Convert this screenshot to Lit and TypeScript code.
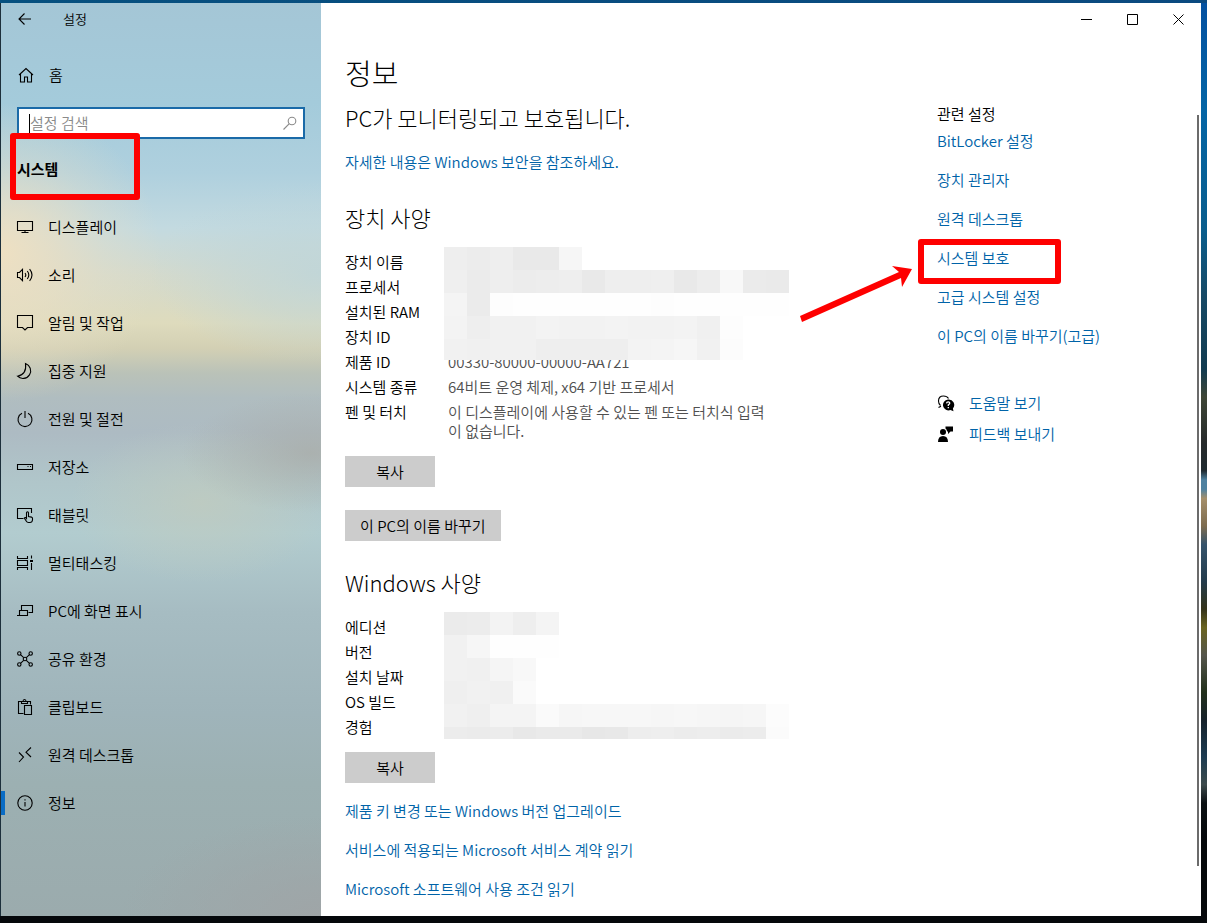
import { LitElement, html, css, svg } from "lit";
import { customElement, property } from "lit/decorators.js";

type Row = { label: string; value: string };

/** Shades of the pixelated cells that cover private values, row by row. */
const DEVICE_MOSAIC = [
  ["eeeeee", "ececec", "eeeeee", "e9e9e9", "e9e9e9", "f6f6f6"],
  ["efefef", "ebebeb", "eeeeee", "ececec", "ededed", "eeeeee", "e9e9e9", "eeeeee", "eeeeee", "efefef", "e9e9e9", "ededed", "f8f8f8", "ebebeb", "eaeaea"],
  ["f4f4f4", "ebebeb", "fdfdfd", "fefefe", "fefefe", "fefefe", "fefefe", "fefefe", "fefefe", "fdfdfd", "fefefe", "fefefe", "fefefe", "fefefe", "fefefe"],
  ["f3f3f3", "eeeeee", "f1f1f1", "f1f1f1", "f3f3f3", "f2f2f2", "f2f2f2", "f3f3f3", "f2f2f2", "f2f2f2", "f3f3f3", "f0f0f0", "fdfdfd"],
  ["f1f1f1", "f0f0f0", "f1f1f1", "f1f1f1", "eeeeee", "eeeeee", "eeeeee", "eeeeee", "f3f3f3", "f4f4f4", "f6f6f6", "f1f1f1", "fcfcfc"],
];
const WINDOWS_MOSAIC = [
  ["ebebeb", "ececec", "f3f3f3", "eeeeee", "f4f4f4"],
  ["f1f1f1", "f6f6f6", "fefefe", "fefefe", "fefefe"],
  ["f1f1f1", "f0f0f0", "f5f5f5", "f8f8f8"],
  ["efefef", "f1f1f1", "f0f0f0", "fafafa"],
  ["f1f1f1", "efefef", "f4f4f4", "f4f4f4", "fafafa", "f6f6f6", "f7f7f7", "f7f7f7", "f7f7f7", "f6f6f6", "f7f7f7", "f6f6f6", "f5f5f5", "f6f6f6", "fcfcfc"],
  ["ececec", "ebebeb", "ececec", "e8e8e8", "eaeaea", "eaeaea", "e7e7e7", "e8e8e8", "ededed", "eeeeee", "ececec", "ededed", "ebebeb", "ececec", "fbfbfb"],
];

const ICONS: Record<string, unknown> = {
  display: svg`<path d="M1.5 3.5h15v9h-15zM9 12.5v2M5.5 14.5h7"/>`,
  sound: svg`<path d="M1.5 6.5h2l3-3.2v11.4l-3-3.2h-2zM9 7q1.6 2 0 4M11.3 5q3 4 0 8M13.6 3.200q4.800 5.800 0 11.600"/>`,
  notify: svg`<path d="M1.500 1.500h15v12h-5l-2.500 2.500-2.500-2.500h-5z"/>`,
  moon: svg`<path d="M9.500 1.500a7.700 7.700 0 1 1-8 12.700q9.500-2 8-12.700z"/>`,
  power: svg`<path d="M6 3.300a7 7 0 1 0 6 0M9 1v7"/>`,
  storage: svg`<path d="M1.500 6.500h15v5h-15z"/><path d="M11.500 8.500h1M14 8.500h1"/>`,
  tablet: svg`<path d="M7.500 12.500h-6v-10h14v4.500"/><path d="M10.500 12.500V6.800q0-1 1-1t1 1v3.700l3 .6q1 .3 1 1.300v1.600q-.3 2.500-2.500 2.500h-1.500q-1.500 0-2.300-1.500l-1.900-3q.9-1.100 2.200.5z"/>`,
  multitask: svg`<path d="M1.500 2v2.500h10V2M1.500 6.500h10v5h-10zM1.500 16v-2.500h10V16M15.500 1.500v3M15.500 9v7"/><path d="M14 7h3" stroke-width="2"/>`,
  project: svg`<path d="M5.500 8V3.500h11v7h-4M3.500 8.500h8v5h-8zM1 13.500h11"/>`,
  share: svg`<circle cx="3.300" cy="3.500" r="1.700"/><circle cx="14.700" cy="3.500" r="1.700"/><circle cx="3.300" cy="14.500" r="1.700"/><circle cx="14.700" cy="14.500" r="1.700"/><circle cx="9" cy="9" r="1.800"/><path d="M4.500 4.700l3.200 3M13.500 4.700l-3.200 3M4.500 13.300l3.200-3M13.500 13.300l-3.200-3"/>`,
  clipboard: svg`<path d="M7.500 15.500h-5v-12h12v3M5.500 5.500v-2h1.500q0-2 1.500-2t1.500 2h1.500v2zM8.500 7.500h7v9h-7z"/>`,
  remote: svg`<path d="M3 6.500l4.500 4.500-4.500 5M15 1.500l-5 4.700 5 4.800"/>`,
  info: svg`<circle cx="9" cy="9" r="7.200"/><path d="M9 8v4.500M9 5.300v1.200"/>`,
  home: svg`<path d="M2 9l7-6.500L16 9M3.500 8v8h4v-5h3v5h4V8"/>`,
  back: svg`<path d="M15 9H3.500M8.500 3.500L3 9l5.500 5.500"/>`,
  search: svg`<circle cx="11" cy="7" r="3.800"/><path d="M8.300 9.700L2.500 15.500"/>`,
  help: svg`<path d="M3.500 11.500q-2-1.500-2-4.500 0-5 5-5 3.500 0 5 2.500M1.500 13.500l2.500-1.300"/><path class="solid" d="M11 5.500a5.500 5.500 0 1 0 2.500 10.600l3 1.200-.6-2.800A5.500 5.500 0 0 0 11 5.500z"/><path class="knock" d="M9.500 9.300q.2-1.500 1.700-1.500t1.600 1.300q0 1-1.500 1.700v1.200M11.300 13v1.200"/>`,
  feedback: svg`<g class="solid"><circle cx="6" cy="7" r="3"/><path d="M1 17q0-6 5-6t5 6zM8.500 1.500h7.500v5h-2.500L11 9V6.500H10q0-2-1.500-3z"/></g>`,
};

@customElement("ui-icon")
class UiIcon extends LitElement {
  @property() name = "";
  static styles = css`
    :host { display: inline-flex; flex: none; }
    svg { width: 18px; height: 18px; fill: none; stroke: currentColor; stroke-width: 1.1; }
    .solid { fill: currentColor; stroke: none; }
    .knock { stroke: #fff; stroke-width: 1.3; }
  `;
  render() {
    return html`<svg viewBox="0 0 18 18" aria-hidden="true">${ICONS[this.name]}</svg>`;
  }
}

@customElement("app-root")
class AppRoot extends LitElement {
  static styles = css`
    *, *::after { box-sizing: border-box; }
    :host {
      display: block;
      font: 350 15px/20px "Noto Sans CJK KR", sans-serif;
      color: #000;
    }
    h1, h2, h3, p, ul { margin: 0; padding: 0; font-weight: inherit; }
    h3 { font-size: 15px; }
    ul { list-style: none; }
    a { color: #0063a8; text-decoration: none; }
    button { font: inherit; color: inherit; border: 0; }

    .desktop {
      min-height: 100vh;
      display: flex;
      padding: 3px 6px 7px 1px;
      background:
        linear-gradient(#05080b, #05080b) bottom / 100% 7px no-repeat,
        linear-gradient(90deg, #06507f, #0b4a80) top / 100% 3px no-repeat,
        linear-gradient(#0450a0 0, #0465a5 12%, #0a5d8c 25%, #174a66 32%, #123b50 40%, #3e4636 43%, #262a2b 48%, #1f2a30 51%, #4e81a0 52%, #4e81a0 53%, #a58f6a 54%, #7d6c50 57%, #35536b 59%, #243c4c 63%, #34331a 66%, #6a6420 68%, #55564c 71%, #22301c 75%, #16222a 78%, #1d3c52 82%, #3d4b4c 85%, #0b1013 87%, #05080b 91%) right / 6px 100% no-repeat,
        #1c2f3b;
    }
    .window { position: relative; flex: 1; display: grid; grid-template-columns: 320px 1fr; background: #fff; }

    .side {
      background:
        radial-gradient(ellipse 160px 150px at 0 250px, #eee0c2 0, #ecdfc2bb 30%, #e8dfc655 65%, #e8dfc600 100%),
        radial-gradient(ellipse 170px 90px at 320px 270px, #bdd5dacc 0, #bdd5da77 50%, #bdd5da00 100%),
        radial-gradient(ellipse 130px 60px at 310px 450px, #a9aaa4aa 0, #a9aaa455 50%, #a9aaa400 100%),
        radial-gradient(ellipse 130px 80px at 200px 500px, #c0cbbfcc 0, #c0cbbf66 50%, #c0cbbf00 100%),
        radial-gradient(ellipse 200px 100px at 320px 913px, #9fa5a7 0, #9fa5a700 100%),
        linear-gradient(#a4c6d6 0, #a4cbdb 100px, #afd0de 170px, #c3dae0 225px, #d4dacd 270px, #deDbbd 320px, #d3d0b4 345px, #bac2b8 370px, #b0bdc0 395px, #adbbc3 430px, #b0c6ca 480px, #b2cccf 530px, #a6bcc2 610px, #9fb4ba 710px, #9cb0b2 780px, #9babad 100%);
    }
    .side-title { display: flex; align-items: center; gap: 29px; height: 32px; padding-left: 15px; font-size: 13px; }
    .icon-button { display: flex; background: none; padding: 0; }
    .home { display: flex; align-items: center; gap: 14px; height: 48px; margin-top: 16px; padding-left: 16px; color: inherit; }
    .search { display: flex; align-items: center; margin: 8px 16px 0; height: 32px; padding: 0 4px 0 10px; border: 2px solid #1a6aa8; background: #fff; }
    .search input { flex: 1; min-width: 0; border: 0; padding: 0; outline: 0; font: inherit; background: none; }
    .search input::placeholder { color: #8a8a8a; opacity: 1; }
    .caret { width: 1px; height: 19px; background: #000; }
    .search ui-icon { color: #8a8a8a; }
    .section { position: relative; height: 64px; padding: 20px 16px; font-weight: 700; }
    .section::after { content: ""; position: absolute; left: 9px; top: -6px; width: 130px; height: 67px; }
    .mark::after { border: 6px solid #fe0000; border-radius: 3px; }
    .nav a { display: flex; align-items: center; gap: 14px; height: 48px; padding-left: 15px; color: inherit; }
    .nav a.current { background: linear-gradient(#0a6cc4, #0a6cc4) left / 4px 24px no-repeat; }

    .controls { display: flex; justify-content: flex-end; height: 32px; }
    .controls button { width: 46px; display: grid; place-items: center; background: none; padding: 0; }
    .controls svg { width: 11px; height: 11px; fill: none; stroke: #000; }
    .content { display: grid; grid-template-columns: minmax(0, 1fr) 240px; padding: 17px 24px 16px; }
    h1 { font-size: 29px; line-height: 40px; font-weight: 300; }
    h2 { font-size: 22px; line-height: 30px; font-weight: 300; }
    .status { margin: 10px 0 20px; }
    .specs { margin-top: 30px; }
    .specs.second { margin-top: 26px; }
    .facts { position: relative; margin: 17px 0 13px; max-width: 428px; }
    table { border-collapse: collapse; width: 100%; line-height: 19px; }
    th, td { padding: 3px 0; text-align: left; vertical-align: top; font-weight: inherit; height: 25px; }
    th { width: 103px; white-space: nowrap; }
    td { color: #505050; }
    .mosaic { position: absolute; left: 99px; top: -2px; display: block; }
    .button { display: block; height: 31px; padding: 0 15px; min-width: 90px; background: #ccc; }
    .button.rename { margin-top: 23px; }
    .links { display: grid; gap: 19px; margin-top: 18px; }

    .related { padding-top: 52px; }
    .related .links { margin-top: 7px; }
    .protect { position: relative; }
    .protect::after { content: ""; position: absolute; left: -19px; top: -9px; width: 143px; height: 45px; }
    .arrow { position: absolute; left: -138px; top: 17px; width: 116px; height: 64px; }
    .support { display: grid; gap: 11px; margin-top: 47px; }
    .support li { display: flex; align-items: center; gap: 14px; color: #000; }
    .scroll { position: absolute; right: 2px; top: 112px; bottom: 50px; width: 2px; background: #6b6b6b; }
  `;

  nav = [
    ["display", "디스플레이"], ["sound", "소리"], ["notify", "알림 및 작업"], ["moon", "집중 지원"],
    ["power", "전원 및 절전"], ["storage", "저장소"], ["tablet", "태블릿"], ["multitask", "멀티태스킹"],
    ["project", "PC에 화면 표시"], ["share", "공유 환경"], ["clipboard", "클립보드"],
    ["remote", "원격 데스크톱"], ["info", "정보"],
  ];

  device: Row[] = [
    { label: "장치 이름", value: "" },
    { label: "프로세서", value: "" },
    { label: "설치된 RAM", value: "" },
    { label: "장치 ID", value: "" },
    { label: "제품 ID", value: "00330-80000-00000-AA721" },
    { label: "시스템 종류", value: "64비트 운영 체제, x64 기반 프로세서" },
    { label: "펜 및 터치", value: "이 디스플레이에 사용할 수 있는 펜 또는 터치식 입력이 없습니다." },
  ];

  windows: Row[] = ["에디션", "버전", "설치 날짜", "OS 빌드", "경험"].map((label) => ({ label, value: "" }));

  facts(rows: Row[], cells: string[][], height: number) {
    return html`<div class="facts">
      <table>
        <tbody>${rows.map((r) => html`<tr><th scope="row">${r.label}</th><td>${r.value}</td></tr>`)}</tbody>
      </table>
      <svg class="mosaic" width="345" height=${height} shape-rendering="crispEdges" aria-hidden="true">
        ${cells.map((row, y) => row.map((c, x) => svg`<rect x=${x * 23} y=${y * 23} width="23" height="23" fill=${"#" + c} />`))}
      </svg>
    </div>`;
  }

  render() {
    return html`<div class="desktop"><div class="window">
      <aside class="side">
        <div class="side-title">
          <button class="icon-button" aria-label="뒤로"><ui-icon name="back"></ui-icon></button>
          <span>설정</span>
        </div>
        <a class="home" href="#"><ui-icon name="home"></ui-icon>홈</a>
        <label class="search">
          <span class="caret"></span>
          <input type="text" placeholder="설정 검색" aria-label="설정 검색" />
          <ui-icon name="search"></ui-icon>
        </label>
        <h3 class="section mark">시스템</h3>
        <nav class="nav">
          ${this.nav.map(([icon, text]) => html`<a href="#" class=${icon === "info" ? "current" : ""}><ui-icon name=${icon}></ui-icon>${text}</a>`)}
        </nav>
      </aside>
      <main>
        <div class="controls">
          <button aria-label="최소화"><svg viewBox="0 0 11 11"><path d="M0 5.500h11"/></svg></button>
          <button aria-label="최대화"><svg viewBox="0 0 11 11"><path d="M.5.5h10v10H.5z"/></svg></button>
          <button aria-label="닫기"><svg viewBox="0 0 11 11"><path d="M.5.5l10 10M10.500.5l-10 10"/></svg></button>
        </div>
        <div class="content">
          <div>
            <h1>정보</h1>
            <h2 class="status">PC가 모니터링되고 보호됩니다.</h2>
            <p><a href="#">자세한 내용은 Windows 보안을 참조하세요.</a></p>
            <h2 class="specs">장치 사양</h2>
            ${this.facts(this.device, DEVICE_MOSAIC, 113)}
            <button class="button">복사</button>
            <button class="button rename">이 PC의 이름 바꾸기</button>
            <h2 class="specs second">Windows 사양</h2>
            ${this.facts(this.windows, WINDOWS_MOSAIC, 127)}
            <button class="button">복사</button>
            <ul class="links">
              <li><a href="#">제품 키 변경 또는 Windows 버전 업그레이드</a></li>
              <li><a href="#">서비스에 적용되는 Microsoft 서비스 계약 읽기</a></li>
              <li><a href="#">Microsoft 소프트웨어 사용 조건 읽기</a></li>
            </ul>
          </div>
          <aside class="related">
            <h3>관련 설정</h3>
            <ul class="links">
              <li><a href="#">BitLocker 설정</a></li>
              <li><a href="#">장치 관리자</a></li>
              <li><a href="#">원격 데스크톱</a></li>
              <li class="protect mark">
                <a href="#">시스템 보호</a>
                <svg class="arrow" viewBox="0 0 116 64" aria-hidden="true">
                  <path fill="#fe0000" d="M1 51L100 7 93 1 113 4 103 22 102 13 3 57z"/>
                </svg>
              </li>
              <li><a href="#">고급 시스템 설정</a></li>
              <li><a href="#">이 PC의 이름 바꾸기(고급)</a></li>
            </ul>
            <ul class="support">
              <li><ui-icon name="help"></ui-icon><a href="#">도움말 보기</a></li>
              <li><ui-icon name="feedback"></ui-icon><a href="#">피드백 보내기</a></li>
            </ul>
          </aside>
        </div>
      </main>
      <div class="scroll"></div>
    </div></div>`;
  }
}
